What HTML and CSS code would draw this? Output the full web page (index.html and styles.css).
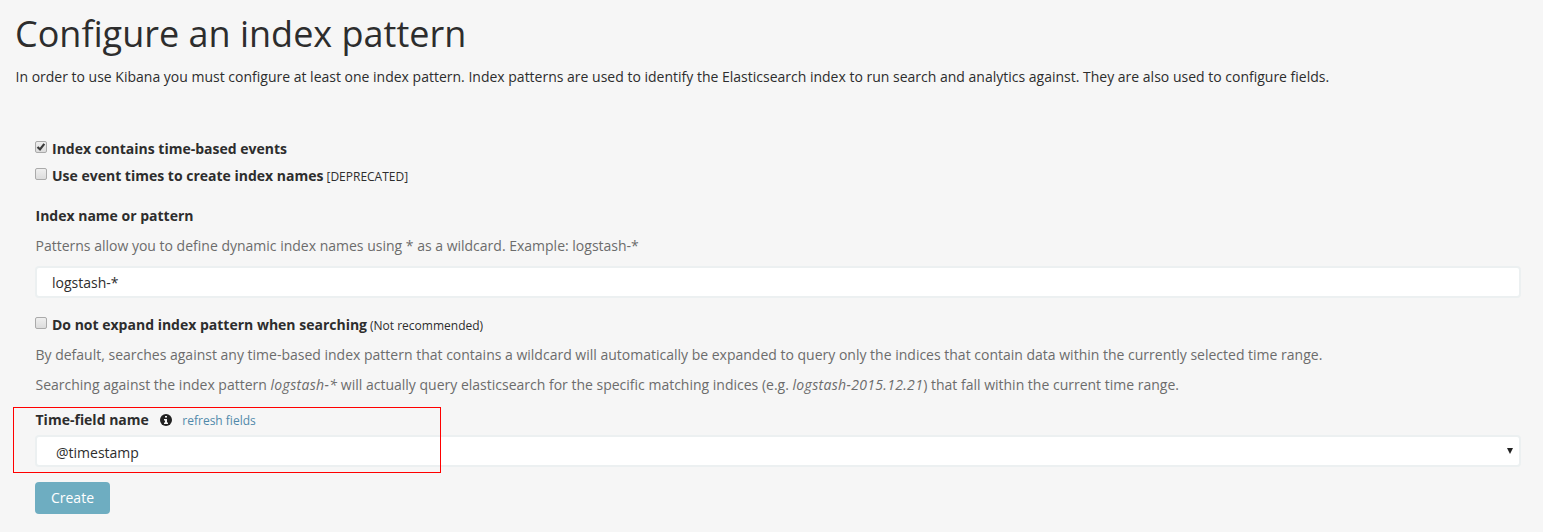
FILE: index.html
```html
<!DOCTYPE html>
<html lang="en">
<head>
<meta charset="utf-8">
<title>Configure an index pattern</title>
<link rel="stylesheet" href="styles.css">
</head>
<body>
<main class="page">
  <h1 class="title">Configure an index pattern</h1>
  <p class="intro">In order to use Kibana you must configure at least one index pattern. Index patterns are used to identify the Elasticsearch index to run search and analytics against. They are also used to configure fields.</p>
  <form class="form">
    <label class="check-row"><span class="box"><svg class="tick" viewBox="0 0 10 10"><path d="M1.5 5 4 7.4 8.3 1.8" fill="none" stroke="#3c3c3c" stroke-width="2.2"/></svg></span><b>Index contains time-based events</b></label>
    <label class="check-row"><span class="box"></span><b>Use event times to create index names</b><small>[DEPRECATED]</small></label>
    <div class="label name-label">Index name or pattern</div>
    <p class="help">Patterns allow you to define dynamic index names using * as a wildcard. Example: logstash-*</p>
    <div class="control">logstash-*</div>
    <label class="check-row expand"><span class="box"></span><b>Do not expand index pattern when searching</b><small>(Not recommended)</small></label>
    <p class="help">By default, searches against any time-based index pattern that contains a wildcard will automatically be expanded to query only the indices that contain data within the currently selected time range.</p>
    <p class="help">Searching against the index pattern <i>logstash-*</i> will actually query elasticsearch for the specific matching indices (e.g. <i>logstash-2015.12.21</i>) that fall within the current time range.</p>
    <div class="time-group">
      <div class="label time-label">Time-field name
        <svg class="info" viewBox="0 0 12 12"><circle cx="6" cy="6" r="6" fill="#222"/><path d="M5 2h2v1.5H5zM4 5h3v3.5h1V10H4V8.5h1v-2H4z" fill="#f6f6f6"/></svg>
        <a class="refresh">refresh fields</a>
      </div>
      <div class="control select"><span>@timestamp</span><svg class="arrow" viewBox="0 0 6 6"><path d="M0 0h6L3 6z" fill="#222"/></svg></div>
      <div class="highlight"></div>
    </div>
    <button class="create" type="button">Create</button>
  </form>
</main>
</body>
</html>
```
FILE: styles.css
```css
* { box-sizing: border-box; }
body { margin: 0; background: #f6f6f6; color: #2d2d2d; font: 14px/20px "Open Sans", sans-serif; }
.page { height: 532px; padding: 13px 15px 0; overflow: hidden; }
.title { margin: 0; font-size: 36px; line-height: 41px; font-weight: 400; white-space: nowrap; }
.intro { margin: 13px 0 0; padding-left: 0.5px; white-space: nowrap; }
.form { padding: 52px 7px 0 20px; }
.check-row { display: flex; align-items: center; height: 20px; margin-bottom: 7px; white-space: nowrap; }
.box { width: 12px; height: 12px; margin: -4px 5px 0 0; border: 1px solid #aaa; border-radius: 2px; background: linear-gradient(#efefef, #dcdcdc); flex: none; }
.tick { display: block; width: 10px; height: 10px; }
.check-row small { font-size: 12px; margin: 1px 0 0 3px; }
.label { font-weight: 700; height: 20px; padding-left: 0.5px; }
.name-label { margin-top: 20px; }
.help { margin: 10px 0 0; padding-left: 0.5px; color: #6c6c6c; white-space: nowrap; }
.help i { letter-spacing: 0.33px; }
.control { height: 32px; border: 2px solid #ecf0f1; border-radius: 4px; background: #fff; padding: 5px 15px 3px; }
.name-label + .help + .control { margin-top: 10px; }
.expand { margin: 17px 0 0; }
.time-group { position: relative; margin-top: 15px; }
.time-label { display: flex; align-items: center; }
.info { width: 12px; height: 12px; margin-left: 11px; }
.refresh { margin: 1px 0 0 10.5px; font-size: 12px; font-weight: 400; color: #5089aa; }
.select { margin-top: 5px; display: flex; align-items: center; justify-content: space-between; padding: 4px 6px 2px 19px; }
.select span { padding-top: 1px; }
.arrow { width: 6px; height: 6px; margin-top: -2px; }
.highlight { position: absolute; left: -22px; top: -3px; width: 428px; height: 66px; border: 1px solid #f00; }
.create { display: block; margin-top: 15px; width: 75px; height: 32px; padding: 0 0 1px; border: 0; border-radius: 4px; background: #6eadc1; color: #fff; font: 14px "Open Sans", sans-serif; }
```
